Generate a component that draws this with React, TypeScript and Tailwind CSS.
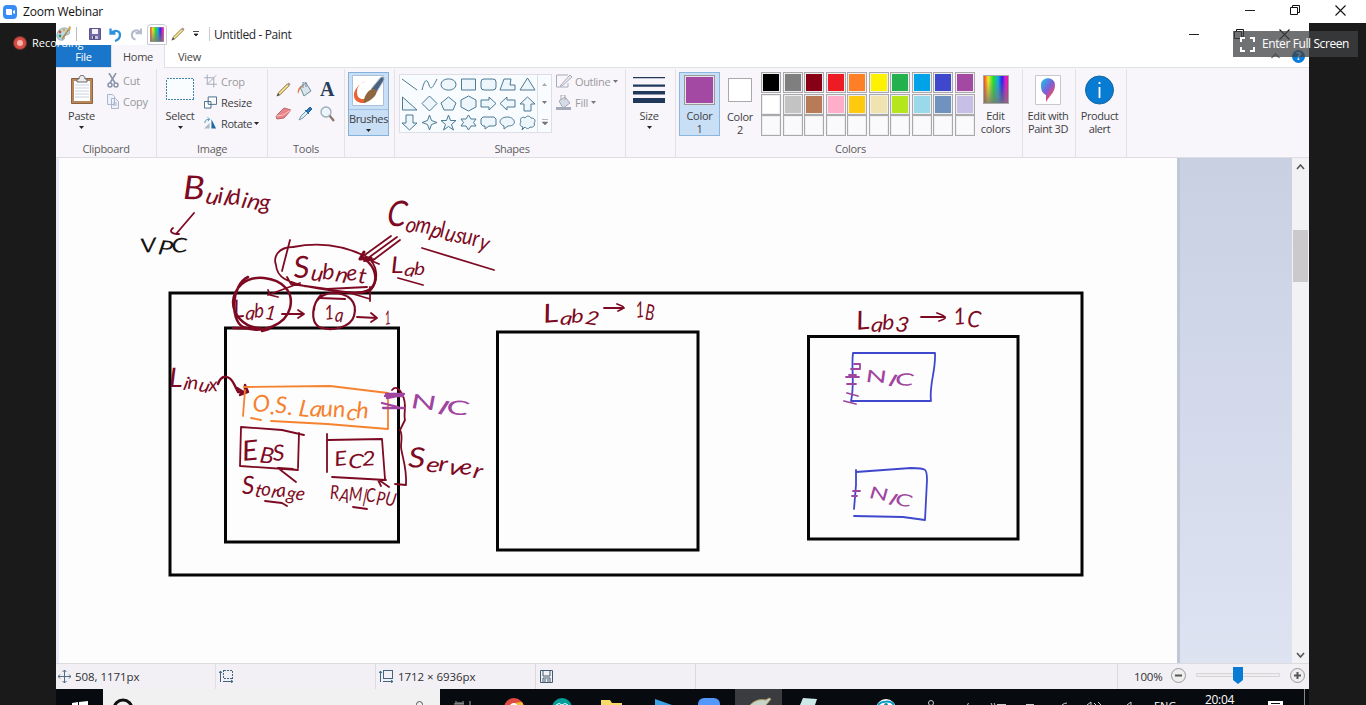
import React from "react";

const PALETTE = [
  ["#000000", "#7f7f7f", "#880015", "#ed1c24", "#ff7f27", "#fff200", "#22b14c", "#00a2e8", "#3f48cc", "#a349a4"],
  ["#ffffff", "#c3c3c3", "#b97a57", "#ffaec9", "#ffc90e", "#efe4b0", "#b5e61d", "#99d9ea", "#7092be", "#c8bfe7"],
  ["", "", "", "", "", "", "", "", "", ""],
];

const MAROON = "#7d0a22";
const ORANGE = "#f5822f";
const PURPLE = "#9f459f";
const BLUE = "#3f48cc";

function Caret({ light = false }: { light?: boolean }) {
  return (
    <svg width="5" height="3" viewBox="0 0 5 3" className="shrink-0">
      <path d="M0 0H5L2.5 3Z" fill={light ? "#777" : "#222"} />
    </svg>
  );
}

function Group({ label, className, children }: { label?: string; className: string; children: React.ReactNode }) {
  return (
    <section className={`flex h-[88px] shrink-0 flex-col border-r border-[#e3e2e6] ${className}`}>
      <div className="flex h-[72px]">{children}</div>
      <div className="h-4 text-center text-[11px] leading-4 tracking-[-0.3px] text-[#5d5d60]">{label}</div>
    </section>
  );
}

function WindowButtons({ gap }: { gap: string }) {
  return (
    <div className={`flex items-center ${gap}`}>
      <svg width="10" height="11" viewBox="0 0 10 11"><path d="M0 5.5H10" stroke="#222" /></svg>
      <svg width="10" height="11" viewBox="0 0 10 11" fill="none" stroke="#111"><path d="M.5 2.5h7v7h-7zM2.5 2.5v-2h7v7h-2" /></svg>
      <svg width="11" height="11" viewBox="0 0 11 11"><path d="M.5.5l10 10M10.5.5l-10 10" stroke="#111" strokeWidth="1.1" /></svg>
    </div>
  );
}

function Pencil({ size = 16 }: { size?: number }) {
  return (
    <svg width={size} height={size} viewBox="0 0 16 16">
      <path d="M2.5 11.5L12 2l2 2L4.5 13.5 1 15z" fill="#e5cf6e" stroke="#786e4d" strokeWidth=".8" />
      <path d="M3.5 12.5L13 3" stroke="#fff3b3" strokeWidth=".8" />
      <path d="M12 2l1.5-1.5 2 2L14 4z" fill="#ad8d90" />
      <path d="M1 15l1.2-3 1.8 1.8z" fill="#444" />
    </svg>
  );
}

function Palette() {
  return (
    <svg width="16" height="16" viewBox="0 0 16 16">
      <path d="M1 8C2 2 10 0 13 4c2 4-1 5-3 5-3 1 0 4-3 5C3 15 0 12 1 8z" fill="#b9dce8" stroke="#70929e" strokeWidth=".7" />
      <circle cx="4" cy="6" r="1.4" fill="#d44937" /><circle cx="8" cy="4" r="1.3" fill="#e2ab2b" /><circle cx="4" cy="10" r="1.4" fill="#389353" />
      <path d="M6 13L13 3" stroke="#b88547" strokeWidth="1.5" /><path d="M12 4l1-4 2 1-1 4z" fill="#cf9f50" />
    </svg>
  );
}

function Rainbow({ id, width, height }: { id: string; width: number; height: number }) {
  return (
    <svg width={width} height={height} viewBox="0 0 28 28" preserveAspectRatio="none">
      <defs>
        <linearGradient id={id}>
          <stop stopColor="#f02020" /><stop offset=".2" stopColor="#f5e52b" /><stop offset=".4" stopColor="#20dc2f" />
          <stop offset=".58" stopColor="#16a6e8" /><stop offset=".73" stopColor="#2526e1" /><stop offset=".88" stopColor="#e61ad9" /><stop offset="1" stopColor="#e71845" />
        </linearGradient>
        <linearGradient id={id + "v"} x2="0" y2="1"><stop offset=".2" stopColor="#777" stopOpacity="0" /><stop offset="1" stopColor="#777" stopOpacity=".85" /></linearGradient>
      </defs>
      <path d="M0 0h28v28H0z" fill={`url(#${id})`} /><path d="M0 0h28v28H0z" fill={`url(#${id}v)`} />
      <path d="M.5.5h27v27H.5z" fill="none" stroke="#aaa" />
    </svg>
  );
}

function QuickBar() {
  return (
    <div className="flex h-[22px] items-center bg-white">
      <Palette />
      <span className="ml-1 h-3.5 w-px bg-[#bbb]" />
      <svg className="ml-3" width="12" height="12" viewBox="0 0 12 12"><path d="M.5.5h11v11H.5z" fill="#756ba4" stroke="#5c538a" /><path d="M3 1h6v5H3z" fill="#f5f3fc" /><path d="M3 8h6v3H3z" fill="#c5c0dd" /><path d="M4 8h2v3H4z" fill="#554b79" /></svg>
      <svg className="ml-2" width="13" height="15" viewBox="0 0 13 15"><path d="M1.5 1.5v5h5M2 6c4-4 9-2 9 2 0 3-2 5-5 6" fill="none" stroke="#2b91dc" strokeWidth="2.3" /></svg>
      <svg className="ml-2" width="12" height="14" viewBox="0 0 13 14"><path d="M12 1v5H6M11 5C7 1 2 4 2 8c0 2 1 4 4 5" fill="none" stroke="#b5bdca" strokeWidth="2.3" /></svg>
      <span className="ml-[5px] flex h-[21px] w-5 items-center justify-center rounded-t-sm border border-[#c6cbd4]"><Rainbow id="quick" width={14} height={15} /></span>
      <span className="ml-1"><Pencil size={14} /></span>
      <svg className="ml-2" width="6" height="6" viewBox="0 0 6 6"><path d="M0 .5h6M1 3h4L3 5z" stroke="#222" fill="#222" strokeWidth=".8" /></svg>
      <span className="ml-[10px] h-3.5 w-px bg-[#ccc]" />
      <span className="ml-1 pt-px text-[12px] leading-4 tracking-[-0.38px] text-[#28282c]">Untitled - Paint</span>
      <div className="mr-[19px] ml-auto"><WindowButtons gap="gap-[35px]" /></div>
    </div>
  );
}

function Tabs() {
  return (
    <div className="flex h-[23px] border-b border-[#dfe0e4] bg-white text-[11px] leading-[23px] tracking-[-0.25px]">
      <div className="w-[55px] bg-[#1976ca] text-center text-white">File</div>
      <div className="h-[23px] w-[54px] border-x border-[#e2e2e6] bg-[#f8f6fa] text-center text-[#444]">Home</div>
      <div className="w-[49px] text-center text-[#444]">View</div>
      <div className="mr-[4px] ml-auto flex items-center gap-3">
        <svg width="9" height="6" viewBox="0 0 9 6"><path d="M.5 5l4-4 4 4" fill="none" stroke="#777" strokeWidth="1.3" /></svg>
        <span className="flex h-[13px] w-[13px] items-center justify-center rounded-full bg-[#087cd8] text-[10px] font-bold text-white">?</span>
      </div>
    </div>
  );
}

const SHAPES: string[] = [
  "M1 3L16 14", "M1 14C4 2 6 3 8 9s4 2 8-6", "M1 8.5C1 1 16 1 16 8.5S1 16 1 8.5", "M1.5 3h14v11h-14z", "M4 3h9q3 0 3 3v5q0 3-3 3H4q-3 0-3-3V6q0-3 3-3z", "M5 3h7l-1 6h5v5H1z", "M8.5 2L16 14H1z",
  "M1.5 2v13H16z", "M8.5 1L16 8.5 8.5 16 1 8.5z", "M8.5 2L16 8l-3 7H4L1 8z", "M8.5 1L16 5v7l-7.5 4L1 12V5z", "M1 5h8V2l7 6.5L9 15v-3H1z", "M16 5H8V2L1 8.5 8 15v-3h8z", "M5 16V9H1l7.5-7L16 9h-4v7z",
  "M5 1v8H1l7.5 7L16 9h-4V1z", "M8.5 1l2 5.5L16 8.5l-5.5 2-2 5.5-2-5.5-5.5-2 5.5-2z", "M8.5 1l2 5.5H16l-4.5 4 2 5.5-5-3.5-5 3.5 2-5.5L1 6.5h5.5z", "M8.5 1l2.5 4h5l-2.5 3.5L16 12h-5l-2.5 4L6 12H1l2.5-3.5L1 5h5z", "M3 3h11l2 2v6l-2 1H9l-4 3v-3H3l-2-2V5z", "M5 15v-3C-2 9 1 3 8.5 3S19 12 9 12z", "M4 13C0 12 1 9 2 8 0 4 4 2 6 4c2-3 5-2 6 0 4 0 5 3 3 5 2 3-2 5-4 4-2 3-4 1-5 0l-3 3z",
];

function Ribbon() {
  return (
    <div className="flex h-[90px] border-b border-[#dddde2] bg-[#f8f6fa] pt-px text-[11px] leading-[13px] tracking-[-0.25px] text-[#3e3e42]">
      <Group label="Clipboard" className="w-[101px]">
        <div className="flex w-[51px] flex-col items-center pt-1.5">
          <svg width="24" height="30" viewBox="0 0 24 30"><path d="M1.5 3.5h21v25h-21z" fill="#b8875c" stroke="#8d643e" /><path d="M4 6h16v20H4z" fill="#fff" /><path d="M5 10h14M5 13h14M5 16h14M5 19h14M5 22h14" stroke="#c8d0df" /><path d="M7 4h2c0-5 6-5 6 0h2v3H7z" fill="#ececec" stroke="#69696b" /></svg>
          <span className="mt-1">Paste</span><span className="mt-1"><Caret /></span>
        </div>
        <div className="flex flex-col gap-1.5 pt-1 text-[#96969b]">
          <div className="flex items-center gap-1"><svg width="12" height="15" viewBox="0 0 12 15" fill="none" stroke="#8792aa" strokeWidth="1.5"><path d="M2 0l6 10M9 0L3 10" /><circle cx="3" cy="12" r="2" /><circle cx="9" cy="12" r="2" /></svg>Cut</div>
          <div className="flex items-center gap-1"><svg width="12" height="15" viewBox="0 0 12 15" fill="#eef1fa" stroke="#abb5ce"><path d="M.5.5h5l2 2v8h-7zM4.5 4.5h4l3 3v7h-7z" /><path d="M6 9h4M6 11h4" /></svg>Copy</div>
        </div>
      </Group>
      <Group label="Image" className="w-[111px]">
        <div className="flex w-[46px] flex-col items-center pt-2">
          <svg width="28" height="24" viewBox="0 0 28 24" shapeRendering="crispEdges"><path d="M.5 1.5h27v21H.5z" fill="#fafdff" stroke="#4084a8" strokeDasharray="2 1" /></svg>
          <span className="mt-2">Select</span><span className="mt-1"><Caret /></span>
        </div>
        <div className="flex flex-col gap-[5px] pt-1 pl-px">
          <div className="flex h-4 items-center gap-1 text-[#9a9a9d]"><svg width="13" height="14" viewBox="0 0 14 14" fill="none" stroke="#a1a9b6"><path d="M3.5 0v10.5H14M0 3.5h10.5V14M3 11l10-10" /></svg>Crop</div>
          <div className="flex h-4 items-center gap-1"><svg width="13" height="13" viewBox="0 0 14 13" fill="#fff" stroke="#3b6685"><path d="M4.5.5h9v8h-9zM.5 5.5h7v7h-7z" /></svg>Resize</div>
          <div className="flex h-4 items-center gap-1"><svg width="13" height="13" viewBox="0 0 14 13"><path d="M0 12l6-6v6z" fill="#a9bbc6" /><path d="M8 2l5 10H8z" fill="#21699f" /><path d="M1 6c0-4 3-4 5-4M4 0l2 2-2 2" fill="none" stroke="#3792b6" /></svg><span className="tracking-[-0.4px]">Rotate</span><span className="-ml-0.5 flex"><Caret /></span></div>
        </div>
      </Group>
      <Group label="Tools" className="w-[77px]">
        <div className="grid h-[57px] w-[70px] grid-cols-3 items-center justify-items-center pt-2 pl-1">
          <Pencil size={15} />
          <svg width="16" height="15" viewBox="0 0 16 15"><path d="M3 5l6-4 5 8-7 5z" fill="#d7e4eb" stroke="#6f8c9d" /><path d="M1 12c-1-4 1-8 5-8L3 7z" fill="#dc7946" /><path d="M6 6V0h3v5" fill="none" stroke="#7d8b96" /></svg>
          <span className="font-['Liberation_Serif',serif] text-[20px] leading-4 font-bold text-[#263d5b]">A</span>
          <svg width="17" height="15" viewBox="0 0 17 15"><path d="M1 10L9 2l7 2-7 8-7 1z" fill="#e9858a" stroke="#bc656b" /><path d="M1 10l7-1 8-5" stroke="#ffc1c1" fill="none" /></svg>
          <svg width="15" height="15" viewBox="0 0 15 15"><path d="M1 14l2-4 5-5 2 2-5 5z" fill="#d9edf6" stroke="#7799aa" /><path d="M7 4l4 4M8 5l4-4 2 2-4 4z" fill="#297bb7" stroke="#1d5f98" /></svg>
          <svg width="15" height="16" viewBox="0 0 15 16"><path d="M9 9l5 6" stroke="#8e7568" strokeWidth="2.4" /><circle cx="6" cy="6" r="5" fill="#edf5fc" stroke="#9aabb9" strokeWidth="1.3" /></svg>
        </div>
      </Group>
      <Group className="w-[50px] pl-[3px]">
        <div className="mt-[3px] flex h-16 w-[41px] flex-col items-center border border-[#85b1dc] bg-[#c9dff6] pt-0.5">
          <svg width="33" height="32" viewBox="0 0 33 32"><path d="M.5.5h31v30H.5z" fill="#fff" stroke="#aac1d7" /><path d="M14 6C-2 13-2 29 13 28l5-6c-8 4-13 2-13-5 0-6 4-9 9-11z" fill="#eb6334" /><path d="M19 14L29 2h3v3L24 18z" fill="#4b6382" stroke="#b6c2cb" /><path d="M12 28c-1-5 3-12 8-14 5-1 6 4 2 8-3 3-6 5-10 6z" fill="#8d673f" /></svg>
          <span className="mt-0.5 w-full border-t border-[#9fc1e4] pt-[2px] text-center tracking-[-0.4px]">Brushes</span><span className="mt-1"><Caret /></span>
        </div>
      </Group>
      <Group label="Shapes" className="w-[231px] pl-[4px]">
        <div className="mt-[5px] flex h-[59px] w-[153px] border border-[#dedfe4] bg-[#f9fcfe]">
          <div className="grid w-[138px] grid-cols-7 content-center justify-items-center gap-y-0.5">
            {SHAPES.map((d, i) => <svg key={i} width="17" height="17" viewBox="0 0 17 17"><path d={d} fill={i < 2 ? "none" : "#edf6fb"} stroke="#4d7995" strokeWidth="1" /></svg>)}
          </div>
          <div className="flex w-[14px] flex-col items-center justify-around border-l border-[#dedfe4]">
            <svg width="5" height="3" viewBox="0 0 5 3"><path d="M0 3h5L2.5 0z" fill="#aaa" /></svg><Caret light /><svg width="6" height="6" viewBox="0 0 6 6"><path d="M0 .5h6M0 3h6L3 6z" fill="#777" stroke="#777" strokeWidth=".5" /></svg>
          </div>
        </div>
        <div className="flex flex-col gap-[5px] pt-1 pl-1 text-[#9a9a9e]">
          <div className="flex h-4 items-center gap-[3px]"><svg width="16" height="14" viewBox="0 0 16 14" fill="none" stroke="#a8acb7"><path d="M12 1H.5v12H12V9" /><path d="M4 12L14 1l2 2L6 12z" fill="#e9eaef" /></svg><span className="tracking-[-0.35px]">Outline</span> <Caret light /></div>
          <div className="flex h-4 items-center gap-[3px]"><svg width="16" height="15" viewBox="0 0 16 15"><path d="M3 6l6-4 5 6-7 5z" fill="#d7dbe5" stroke="#a2a7b8" /><path d="M0 12h15v3H0z" fill="#a5aaba" /><path d="M5 5V0h4v5" fill="none" stroke="#aaa" /></svg>Fill <Caret light /></div>
        </div>
      </Group>
      <Group className="w-[50px]">
        <div className="flex w-[46px] flex-col items-center pt-2">
          <svg width="32" height="26" viewBox="0 0 32 26"><path d="M0 0h32v1.3H0zM0 7.5h32v2.3H0zM0 14h32v3.5H0zM0 21h32v5H0z" fill="#20395b" /></svg>
          <span className="mt-1.5">Size</span><span className="mt-1"><Caret /></span>
        </div>
      </Group>
      <Group label="Colors" className="w-[347px] pl-[3px]">
        <div className="mt-[3px] flex h-16 w-[41px] flex-col items-center border border-[#8db6df] bg-[#c9dff6] pt-0.5 text-center">
          <span className="h-8 w-[31px] border border-[#999] bg-[#a349a4] ring-1 ring-[#e4e4e4] ring-inset" /><span className="mt-1">Color<br />1</span>
        </div>
        <div className="flex w-[40px] flex-col items-center pt-[9px] text-center">
          <span className="h-6 w-6 border border-[#aaa] bg-white" /><span className="mt-2">Color<br />2</span>
        </div>
        <div className="mt-[3px] ml-px flex flex-col gap-[0.5px]">
          {PALETTE.map((row, r) => <div key={r} className="flex gap-[1.5px]">{row.map((color, c) => <span key={c} className="h-[21px] w-5 border border-[#a9a9ac] bg-[#faf9fb] ring-1 ring-[#eee] ring-inset" style={color ? { backgroundColor: color } : undefined} />)}</div>)}
        </div>
        <div className="flex w-[42px] flex-col items-center pt-1.5 text-center"><Rainbow id="editing" width={26} height={29} /><span className="mt-[5px]">Edit<br />colors</span></div>
      </Group>
      <Group className="w-[53px]">
        <div className="flex w-[50px] flex-col items-center pt-1.5 text-center">
          <svg width="26" height="30" viewBox="0 0 26 30"><defs><linearGradient id="drop" x2=".8" y2="1"><stop stopColor="#16c9e8" /><stop offset=".5" stopColor="#7961da" /><stop offset=".8" stopColor="#e34c75" /><stop offset="1" stopColor="#ffc42f" /></linearGradient></defs><path d="M.5.5h25v29H.5z" fill="#fff" stroke="#c8c8cc" /><path d="M6 10c0-9 14-9 14 0 0 7-4 9-9 17v-7c-4-2-5-5-5-10z" fill="url(#drop)" /></svg>
          <span className="mt-1 whitespace-nowrap tracking-[-0.4px]">Edit with<br />Paint 3D</span>
        </div>
      </Group>
      <Group className="w-[51px]">
        <div className="flex w-[47px] flex-col items-center pt-1.5 text-center tracking-[-0.4px]"><svg width="29" height="30" viewBox="0 0 29 30"><circle cx="14.5" cy="15" r="14" fill="#087bd2" stroke="#1968a1" /><path d="M14.5 12v11M14.5 7v2" stroke="#fff" strokeWidth="1.8" /></svg><span className="mt-1">Product<br />alert</span></div>
      </Group>
    </div>
  );
}

const TILT = [-6, 7, -3, 9, -7, 4, 8, -5];
const LIFT = [0, 1.2, -1.4, 1, -0.8, 1.5, -1, 0.6];

type WordProps = { x: number; y: number; length: number; size: number; first?: number; angle?: number; color?: string; children: string };
function Word({ x, y, length, size, first, angle = 0, color = MAROON, children }: WordProps) {
  const tilt = Array.from(children, (_, i) => TILT[i % TILT.length]).join(" ");
  const lift = Array.from(children.slice(1), (_, i) => LIFT[(i + 1) % LIFT.length]).join(" ");
  return (
    <text x={x} y={y} textLength={length} lengthAdjust="spacingAndGlyphs" fontSize={size} fill={color} rotate={tilt} transform={`rotate(${angle} ${x} ${y})`}>
      <tspan fontSize={first ?? size}>{children.slice(0, 1)}</tspan><tspan dy={lift}>{children.slice(1)}</tspan>
    </text>
  );
}

function Drawing() {
  return (
    <svg width="1118" height="505" viewBox="59 158 1118 505" fill="none" strokeLinecap="round" strokeLinejoin="round" className="shrink-0 bg-[#fdfdfd] font-['Lato','Open_Sans',sans-serif] italic">
      <g stroke="#050505" strokeWidth="3" strokeLinecap="square" strokeLinejoin="miter">
        <path d="M170 293H1082V575H170zM225.5 328H398.5V542H225.5zM497.5 332H698V550H497.5zM808.5 336.5H1018V539H808.5z" />
      </g>
      <g stroke={MAROON} strokeWidth="1.8">
        <path d="M194 213l-18 21M173 228c-4 3-2 6 6 6M422 248l72 22M391 236l-29 21M397 237l-33 24 11-2M400 240l-28 21 7 3M398 278l25 7M290 240l-8 31" />
        <path d="M364 252l-4 7 11-1" strokeWidth="3" />
        <path d="M293 247c-15 0-20 10-17 18 1 14 14 17 28 21 22 4 53 10 67 4 8-10 7-25-4-33-23-12-49-15-74-10M287 277l4 7 36 5 40-2M300 283l-32 12M268 290l2 5 8 2M350 293l20 6M370 287v14" />
        <path d="M361 257c12 6 18 19 12 29-6 10-24 7-43 4" strokeWidth="2.5" />
        <path d="M248 277c-17 8-18 43-5 50 20 8 43-3 47-19 4-16-7-28-26-30-20-2-30 11-31 24 0 12 10 25 26 26M233 328l36 1-7 2" strokeWidth="2.5" />
        <path d="M321 295c-9 9-11 26-2 32 13 5 32 0 35-11 4-14-5-23-22-23-11 1-18 8-18 17M320 298l25 1" strokeWidth="2.2" />
        <path d="M282 314h21M298 310l6 4-6 4M357 317l20 1M371 313l6 5-6 4" />
        <path d="M604 308h20M617 304c9 3 8 4 1 7M921 317h24M937 313c12 4 9 6 2 8" />
        <path d="M218 384c4-11 12-8 16 0l4 8 5 1M237 388l8 5 0-8 3 7-8 3" strokeWidth="2.4" />
        <path d="M241 427l41 3 22 5M241 427l-1 39 58 4M299 433l-1 35M298 470l-20-2 18 14M279 468l14 1M327 434v38M328 440l54-1 3 40M332 477l54 3M379 480l10 7M378 480l3 6M265 501l17 2 5 3M353 507l14 2" />
        <path d="M392 390c4-5 8 0 10 4 6 10 1 19 3 26l-5 10c3 6 1 10 1 17 1 10 6 20 5 38l-11-1" />
      </g>
      <g stroke={ORANGE} strokeWidth="1.8"><path d="M244 387l86-1 58 7v36l-61-5-56-3M245 390l-2 26M251 418l10 2" /></g>
      <path d="M385 396h18M387 398l15-3M386 394h18M382 403l16 4M383 408h21" stroke={PURPLE} strokeWidth="2.3" />
      <g stroke={BLUE} strokeWidth="1.8"><path d="M853 353h82c1 18-6 31-4 48h-80c4-17 0-34 2-48M856 470v15l-2 24M856 472l55-4c16 0 16 1 16 12l-2 40-22-3-49-1" /></g>
      <g stroke={PURPLE} strokeWidth="1.8"><path d="M854 364h6v5h-9M849 375h7M846 377h13M847 384h9M847 393l11 3M844 401l12 3M853 491h7M852 496h5" /></g>
      <Word x={183} y={199} length={88} size={22} first={33} angle={7}>Building</Word>
      <Word x={141} y={253} length={47} size={20} color="#151515">VPC</Word>
      <Word x={386} y={225} length={104} size={23} first={36} angle={13}>Complusury</Word>
      <Word x={294} y={278} length={72} size={22} first={30} angle={3}>Subnet</Word>
      <Word x={391} y={273} length={34} size={18} first={23} angle={5}>Lab</Word>
      <Word x={234} y={318} length={41} size={20} first={25}>Lab1</Word>
      <Word x={325} y={320} length={18} size={20}>1a</Word>
      <Word x={385} y={325} length={6} size={19}>1</Word>
      <Word x={169} y={387} length={49} size={19} first={27} angle={6}>Linux</Word>
      <Word x={253} y={412} length={116} size={23} angle={3} color={ORANGE}>O.S. Launch</Word>
      <Word x={243} y={461} length={42} size={22} first={28}>EBS</Word>
      <Word x={335} y={466} length={41} size={20}>EC2</Word>
      <Word x={242} y={494} length={62} size={19} first={25} angle={5}>Storage</Word>
      <Word x={330} y={499} length={65} size={19} angle={5}>RAM|CPU</Word>
      <Word x={408} y={467} length={74} size={22} first={28} angle={8}>Server</Word>
      <Word x={411} y={408} length={58} size={20} angle={9} color={PURPLE}>NIC</Word>
      <Word x={544} y={323} length={54} size={19} first={26}>Lab2</Word>
      <Word x={636} y={318} length={18} size={22}>1B</Word>
      <Word x={857} y={330} length={51} size={21} first={26}>Lab3</Word>
      <Word x={954} y={325} length={26} size={23}>1C</Word>
      <Word x={866} y={382} length={48} size={17} angle={6} color={PURPLE}>NIC</Word>
      <Word x={869} y={498} length={43} size={17} angle={14} color={PURPLE}>NIC</Word>
    </svg>
  );
}

function StatusBar() {
  return (
    <div className="flex h-[26px] items-center border-t border-[#dcdce0] bg-[#f2f0f4] text-[11.5px] tracking-[-0.05px] text-[#303034]">
      <div className="flex h-full w-[160px] items-center gap-1 border-r border-[#e0dfe3] pl-[2px]"><svg width="13" height="13" viewBox="0 0 13 13" fill="none" stroke="#526d87"><path d="M6.5 0v13M0 6.5h13M4.5 2l2-2 2 2M4.5 11l2 2 2-2M2 4.5l-2 2 2 2M11 4.5l2 2-2 2" /></svg>508, 1171px</div>
      <div className="flex h-full w-[160px] items-center border-r border-[#ddd] pl-[3px]"><SizeIcon dashed /></div>
      <div className="flex h-full w-[160px] items-center gap-1 border-r border-[#d9d9de] pl-[3px]"><SizeIcon />1712 × 6936px</div>
      <div className="flex h-full w-[160px] items-center border-r border-[#d9d9de] pl-1"><svg width="13" height="13" viewBox="0 0 13 13" fill="none" stroke="#425b70"><path d="M.5.5h12v12H.5zM3 1v5h7V1M3 12V8h7v4M5 9v3M8 9v3" /></svg></div>
      <div className="ml-auto flex h-full items-center border-l border-[#d9d9de] pl-4">
        <span className="w-[29px] tracking-[-0.15px]">100%</span>
        <span className="ml-[8px] pb-0.5"><Zoom /></span>
        <svg className="ml-[10px] mb-1" width="84" height="20" viewBox="0 0 84 20"><path d="M.5 8.5h83v3H.5z" fill="#eee" stroke="#d5d5d8" /><path d="M37 2h10v13l-5 4-5-4z" fill="#087bd4" /></svg>
        <span className="mr-[4px] ml-[10px] pb-0.5"><Zoom plus /></span>
      </div>
    </div>
  );
}

function SizeIcon({ dashed = false }: { dashed?: boolean }) {
  return <svg width="15" height="13" viewBox="0 0 15 13" fill="none" stroke="#426680"><path d="M1.5 12V1M0 3l1.5-2L3 3M4 11.5h10M12 10l2 1.5-2 1.5" /><path d="M4.5.5h9v8h-9z" strokeDasharray={dashed ? "2 1" : undefined} shapeRendering="crispEdges" /></svg>;
}
function Zoom({ plus = false }: { plus?: boolean }) {
  return <svg width="15" height="15" viewBox="0 0 15 15"><circle cx="7.5" cy="7.5" r="7" fill="#eee" stroke="#999" /><path d={plus ? "M4 7.5h7M7.5 4v7" : "M4 7.5h7"} stroke="#555" strokeWidth="2" /></svg>;
}

function Taskbar() {
  return (
    <div className="flex h-4 overflow-hidden bg-[#070a0e] text-[11px] text-white">
      <div className="flex w-[47px] justify-center pt-3"><svg width="16" height="5" viewBox="0 0 16 5"><path d="M0 2l6-1v4H0zM7 1l9-1v5H7z" fill="#fff" /></svg></div>
      <div className="flex w-[337px] bg-[#f1f1f1] pt-[9px]"><svg className="ml-[9px]" width="22" height="22" viewBox="0 0 22 22"><circle cx="11" cy="11" r="9" fill="none" stroke="#111" strokeWidth="3" /></svg><span className="ml-2 pt-[3px] text-[11.5px] leading-4 text-[#475464]">Type here to search</span><span className="mt-[3px] mr-[17px] ml-auto h-4 w-[7px] rounded-t-sm border-[1.5px] border-[#555]" /></div>
      <svg width="460" height="16" viewBox="440 0 460 16"><path d="M455 14h9M456 12v1M463 12v1M470 12v4M454 15h10" stroke="#aaa" /><circle cx="514" cy="19" r="10" fill="#e14a40" /><circle cx="514" cy="19" r="5" fill="#fff" /><path d="M514 14a5 5 0 015 5h5a10 10 0 00-2-6z" fill="#f5be32" /><circle cx="562" cy="19" r="10" fill="#009e9b" /><path d="M556 16q3-3 6 0 3-3 6 0" fill="none" stroke="#fff" /><path d="M601 11h9l2 3h10v2h-21z" fill="#f8da67" /><path d="M655 10l17 6h-17z" fill="#3da3e5" /><rect x="698" y="9" width="22" height="15" rx="6" fill="#5297fa" /><path d="M735 0h47v16h-47z" fill="#3a3c40" /><path d="M750 16q7-7 16-5l3-2 2 1-5 6" fill="#c7d5ca" stroke="#b29760" /><path d="M803 9l14 1-2 6h-15z" fill="#cde9e8" /><circle cx="886" cy="20" r="10" fill="#fff" /><path d="M878 16c3-4 13-5 16 0" fill="none" stroke="#0799c5" strokeWidth="2" /><circle cx="886" cy="16" r="2" fill="#1788b0" /></svg>
      <svg width="254" height="16" viewBox="900 0 254 16" fill="none" stroke="#ccc"><circle cx="931" cy="14" r="2.5" /><path d="M967 15.5l2-1M991 14l1 2M994 14l1 2M997 15.5h9M1026 15.5h8M1062 16q2-2 5-2M1087 16l4-3v3M1094 14l2 2M1098 13l3 3M1127 16l4-3v3" /></svg>
      <span className="w-[36px] pt-[11px] text-[11px] leading-3">ENG</span>
      <span className="ml-[15px] pt-1 text-[12px] leading-[14px] tracking-[-0.3px]">20:04</span>
      <svg className="ml-auto" width="50" height="16" viewBox="0 0 50 16"><path d="M9 12h15v4H9z" fill="#fff" /><path d="M12 14.5h9" stroke="#111" /><path d="M45.5 0v16" stroke="#888" /></svg>
    </div>
  );
}

export default function App() {
  return (
    <div className="relative flex h-[705px] w-[1366px] flex-col overflow-hidden bg-[#1a1a1a] font-['Open_Sans','Noto_Sans',sans-serif]">
      <header className="flex h-[23px] shrink-0 items-center bg-white">
        <svg className="ml-[3px]" width="14" height="14" viewBox="0 0 14 14"><rect width="14" height="14" rx="4" fill="#398bf5" /><path d="M3 4h5l1 1v5H4L3 9zM10 6l2-1v4l-2-1z" fill="#fff" /></svg>
        <span className="ml-[6px] text-[12px] leading-5 tracking-[-0.22px] text-[#111]">Zoom Webinar</span>
        <div className="mr-[20px] mb-[3px] ml-auto"><WindowButtons gap="gap-[35px]" /></div>
      </header>
      <main className="ml-[56px] flex h-[682px] w-[1253px] flex-col">
        <QuickBar /><Tabs /><Ribbon />
        <div className="flex h-[505px] overflow-hidden bg-[#dfe5f2]">
          <span className="w-[3px] bg-[#e7ebf7]" />
          <Drawing />
          <div className="w-[115px] border-l-[3px] border-[#c0c8d8] bg-linear-to-b from-[#c8d0e2] to-[#dee3f2]" />
          <div className="flex w-[17px] flex-col items-center bg-[#f2f1f4]">
            <svg className="mt-1.5" width="9" height="6" viewBox="0 0 9 6"><path d="M1 5l3.5-4L8 5" fill="none" stroke="#555" strokeWidth="1.6" /></svg>
            <span className="mt-[60px] h-[52px] w-[15px] bg-[#cbc9cc]" />
            <svg className="mt-auto mb-[5px]" width="9" height="6" viewBox="0 0 9 6"><path d="M1 1l3.5 4L8 1" fill="none" stroke="#555" strokeWidth="1.6" /></svg>
          </div>
        </div>
        <StatusBar /><Taskbar />
      </main>
      <div className="absolute top-[36px] left-[14px] flex items-center gap-1.5 text-[11px] leading-[14px] text-white"><span className="flex h-3 w-3 items-center justify-center rounded-full bg-[#d84c43] ring-1 ring-[#713630]"><span className="h-1.5 w-1.5 rounded-full bg-[#f3b4aa]" /></span>Recording</div>
      <div className="absolute top-[31px] left-[1233px] flex h-[26px] w-[125px] items-center bg-[#404144]/75 pl-[7px] text-[12px] tracking-[-0.4px] whitespace-nowrap text-white"><svg width="15" height="15" viewBox="0 0 15 15" fill="none" stroke="#fff" strokeWidth="2"><path d="M1 5V1h4M10 1h4v4M14 10v4h-4M5 14H1v-4" /></svg><span className="ml-[7px]">Enter Full Screen</span></div>
    </div>
  );
}
